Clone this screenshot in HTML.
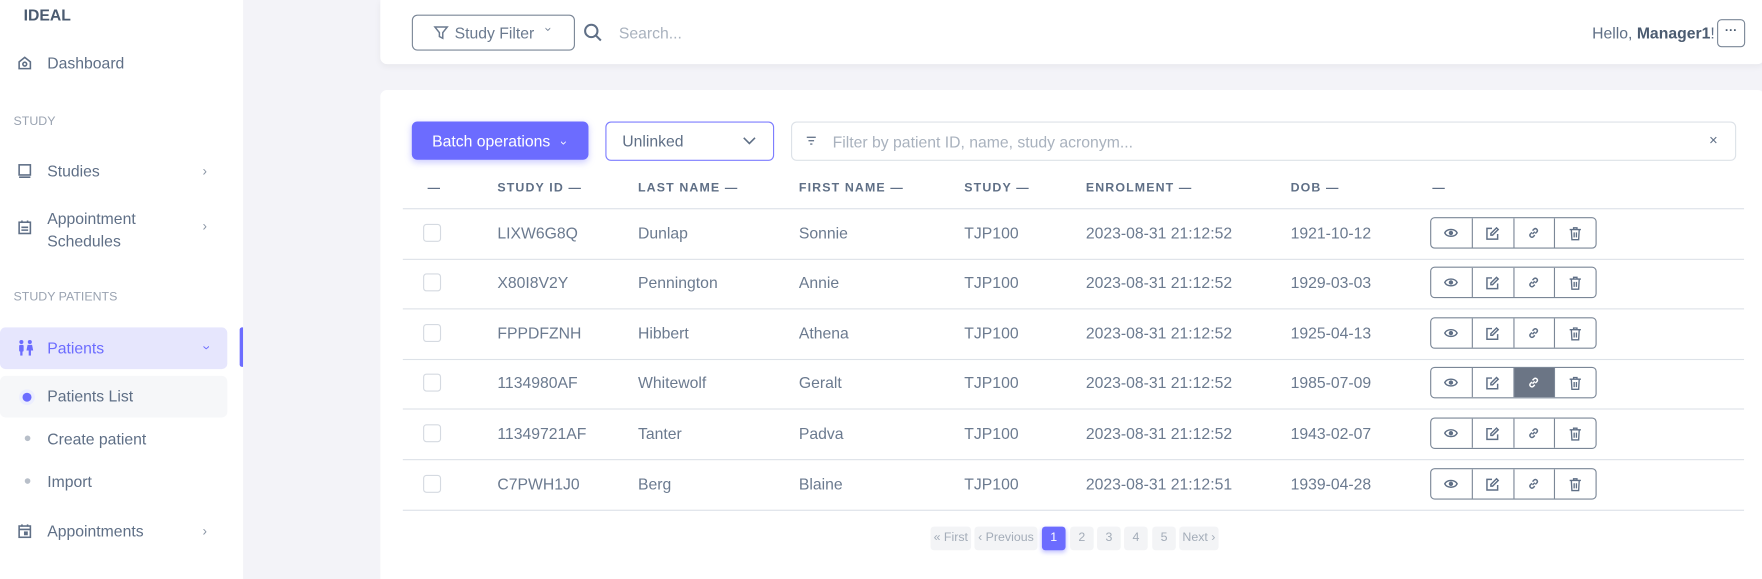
<!DOCTYPE html>
<html><head><meta charset="utf-8"><style>
*{box-sizing:border-box;margin:0;padding:0}
html,body{width:1762px;height:579px;overflow:hidden;background:#f3f3f8}
#w{position:absolute;left:0;top:0;width:1566px;height:515px;overflow:hidden;transform:scale(1.1252);transform-origin:0 0;font-family:"Liberation Sans",sans-serif;color:#6b7a8f;font-size:14px}
.a{position:absolute;white-space:nowrap}
#side{position:absolute;left:0;top:0;width:216px;height:515px;background:#fff}
.sec{font-size:11px;color:#9aa3b1;left:12px}
.nav{left:42px;font-size:14px;color:#5f6f86}
.chev{left:180px;font-size:12px;color:#8a95a5}
.card{position:absolute;background:#fff;left:338px;width:1230px}
.th{font-size:11px;font-weight:bold;letter-spacing:1px;color:#5f6f86;top:161px}
.td{font-size:14px;color:#6b7a8f}
.hl{position:absolute;left:358px;width:1192px;height:1px;background:#dde2e8}
.cb{position:absolute;left:376px;width:16px;height:16px;border:1px solid #d5dae1;border-radius:3px;background:#fff}
.act{position:absolute;left:1271px;width:148px;height:28px;border:1px solid #7b8797;border-radius:4px;display:flex;overflow:hidden}
.act div{flex:1;border-right:1px solid #7b8797;display:flex;align-items:center;justify-content:center}
.act div:last-child{border-right:none}
.pg{position:absolute;top:468px;height:21px;background:#f3f4f6;border-radius:3px;font-size:11px;color:#a3acb8;text-align:center;line-height:21px}
</style></head><body><div id="w">
<div id="side">
<div class="a" style="left:21px;top:5px;font-weight:bold;font-size:14px;color:#4b5b70">IDEAL</div>
<svg class="a" style="left:15px;top:49px" width="14" height="14" viewBox="0 0 14 14" fill="none" stroke="#5f6f86" stroke-width="1.4"><path d="M2 6L7 2l5 4v6H2z"/><circle cx="7" cy="8" r="1.7"/></svg>
<div class="a nav" style="top:48px">Dashboard</div>
<div class="a sec" style="top:102px">STUDY</div>
<svg class="a" style="left:15px;top:145px" width="14" height="14" viewBox="0 0 14 14" fill="none" stroke="#5f6f86" stroke-width="1.4"><rect x="2" y="1.5" width="10" height="9"/><path d="M2 12.5h10"/></svg>
<div class="a nav" style="top:144px">Studies</div><div class="a chev" style="top:145px">›</div>
<svg class="a" style="left:15px;top:195px" width="14" height="14" viewBox="0 0 14 14" fill="none" stroke="#5f6f86" stroke-width="1.4"><rect x="2" y="2.5" width="10" height="10"/><path d="M4.5 1v2M9.5 1v2M4 7h6M4 9.5h6"/></svg>
<div class="a nav" style="top:184px;line-height:20px">Appointment<br>Schedules</div><div class="a chev" style="top:194px">›</div>
<div class="a sec" style="top:258px">STUDY PATIENTS</div>
<div class="a" style="left:0;top:291px;width:202px;height:37px;background:#e6e6fd;border-radius:5px"></div>
<div class="a" style="left:213px;top:291px;width:3px;height:35px;background:#6c6cff;border-radius:2px 0 0 2px"></div>
<svg class="a" style="left:15px;top:302px" width="16" height="15" viewBox="0 0 16 15" fill="#6c6cff"><circle cx="4" cy="2" r="1.8"/><circle cx="11.5" cy="2" r="1.8"/><rect x="2" y="4.5" width="4" height="6" rx="1"/><rect x="3" y="9" width="2" height="5"/><path d="M9.5 4.5h4l1 5h-6z"/><rect x="10.5" y="9" width="2" height="5"/></svg>
<div class="a nav" style="top:301px;color:#6c6cff">Patients</div><div class="a chev" style="top:302px;color:#6c6cff;transform:rotate(90deg);left:182px">›</div>
<div class="a" style="left:0;top:334px;width:202px;height:37px;background:#f6f7f9;border-radius:5px"></div>
<div class="a" style="left:17px;top:346px;width:14px;height:14px;border-radius:50%;background:#fff;border:3px solid #eceefe"></div>
<div class="a" style="left:20px;top:349px;width:8px;height:8px;border-radius:50%;background:#6c6cff"></div>
<div class="a nav" style="top:344px">Patients List</div>
<div class="a" style="left:22px;top:387px;width:5px;height:5px;border-radius:50%;background:#b8bfc9"></div>
<div class="a nav" style="top:382px">Create patient</div>
<div class="a" style="left:22px;top:425px;width:5px;height:5px;border-radius:50%;background:#b8bfc9"></div>
<div class="a nav" style="top:420px">Import</div>
<svg class="a" style="left:15px;top:465px" width="14" height="14" viewBox="0 0 14 14" fill="none" stroke="#5f6f86" stroke-width="1.4"><rect x="2" y="2.5" width="10" height="10"/><path d="M4.5 1v2M9.5 1v2M2 5.5h10"/><rect x="7" y="8" width="2" height="2" fill="#5f6f86"/></svg>
<div class="a nav" style="top:464px">Appointments</div><div class="a chev" style="top:465px">›</div>
</div>

<div class="card" style="top:0;height:57px;border-radius:0 0 6px 6px;box-shadow:0 2px 6px rgba(0,0,0,.05)"></div>
<div class="a" style="left:366px;top:13px;width:145px;height:32px;border:1px solid #7b8797;border-radius:5px"></div>
<svg class="a" style="left:385px;top:22px" width="14" height="14" viewBox="0 0 14 14" fill="none" stroke="#6b7a8f" stroke-width="1.3"><path d="M1.5 2h11L8.5 7v5l-3-1.5V7z"/></svg>
<div class="a" style="left:404px;top:21px;font-size:14px;color:#6b7a8f">Study Filter</div>
<div class="a" style="left:485px;top:20px;font-size:11px;transform:rotate(90deg);color:#6b7a8f">›</div>
<svg class="a" style="left:518px;top:20px" width="18" height="18" viewBox="0 0 18 18" fill="none" stroke="#5f6f86" stroke-width="1.8"><circle cx="7.5" cy="7.5" r="5.5"/><path d="M11.5 11.5l4.5 4.5"/></svg>
<div class="a" style="left:550px;top:21px;color:#a9b2be">Search...</div>
<div class="a" style="left:1415px;top:21px;color:#5f6f86">Hello, <b style="color:#4b5b70">Manager1</b>!</div>
<div class="a" style="left:1526px;top:17px;width:25px;height:25px;border:1px solid #7b8797;border-radius:4px;text-align:center;line-height:18px;font-size:11px;color:#4b5b70;font-weight:bold">···</div>

<div class="card" style="top:80px;height:440px;border-radius:6px"></div>
<div class="a" style="left:366px;top:108px;width:157px;height:34px;background:#6c6cff;border-radius:5px;box-shadow:0 2px 6px rgba(108,108,255,.35);color:#fff;font-size:14px;line-height:34px;padding-left:18px">Batch operations <span style="display:inline-block;transform:rotate(90deg);font-size:11px;margin-left:6px">›</span></div>
<div class="a" style="left:538px;top:108px;width:150px;height:35px;border:1px solid #7d7dff;border-radius:5px;font-size:14px;color:#5f6f86;line-height:33px;padding-left:14px">Unlinked</div>
<svg class="a" style="left:660px;top:121px" width="12" height="8" viewBox="0 0 12 8" fill="none" stroke="#5f6f86" stroke-width="1.4"><path d="M1 1.5l5 5 5-5"/></svg>
<div class="a" style="left:703px;top:108px;width:840px;height:35px;border:1px solid #dde2e8;border-radius:5px"></div>
<svg class="a" style="left:716px;top:121px" width="10" height="8" viewBox="0 0 10 8" stroke="#6b7a8f" stroke-width="1.2"><path d="M1 1h8M2.5 4h5M4 7h2"/></svg>
<div class="a" style="left:740px;top:118px;color:#a9b2be">Filter by patient ID, name, study acronym...</div>
<div class="a" style="left:1519px;top:117px;color:#5f6f86;font-size:13px">×</div>

<div class="a th" style="left:380px">—</div>
<div class="a th" style="left:442px">STUDY ID —</div>
<div class="a th" style="left:567px">LAST NAME —</div>
<div class="a th" style="left:710px">FIRST NAME —</div>
<div class="a th" style="left:857px">STUDY —</div>
<div class="a th" style="left:965px">ENROLMENT —</div>
<div class="a th" style="left:1147px">DOB —</div>
<div class="a th" style="left:1273px">—</div>
<div class="hl" style="top:185px"></div>

<div id="rows"></div>
<script>
var R=[["LIXW6G8Q","Dunlap","Sonnie","2023-08-31 21:12:52","1921-10-12"],["X80I8V2Y","Pennington","Annie","2023-08-31 21:12:52","1929-03-03"],["FPPDFZNH","Hibbert","Athena","2023-08-31 21:12:52","1925-04-13"],["1134980AF","Whitewolf","Geralt","2023-08-31 21:12:52","1985-07-09"],["11349721AF","Tanter","Padva","2023-08-31 21:12:52","1943-02-07"],["C7PWH1J0","Berg","Blaine","2023-08-31 21:12:51","1939-04-28"]];
var eye='<svg width="13" height="10" viewBox="0 0 13 10" fill="none" stroke="#5f6f86" stroke-width="1.3"><path d="M1 5c2-4 9-4 11 0-2 4-9 4-11 0z"/><circle cx="6.5" cy="5" r="1.3" fill="#5f6f86"/></svg>';
var ed='<svg width="13" height="13" viewBox="0 0 13 13" fill="none" stroke="#5f6f86" stroke-width="1.3"><path d="M6 2H1.5v9.5H11V7"/><path d="M10 1.5l1.5 1.5L6.5 8H5V6.5z"/></svg>';
var lk=function(c){return '<svg width="12" height="12" viewBox="0 0 12 12" fill="none" stroke="'+c+'" stroke-width="1.3"><path d="M5 7l2-2M4.5 5.5L3 7a1.8 1.8 0 0 0 2.5 2.5L7 8M7.5 6.5L9 5a1.8 1.8 0 0 0-2.5-2.5L5 4"/></svg>'};
var tr='<svg width="12" height="13" viewBox="0 0 12 13" fill="none" stroke="#5f6f86" stroke-width="1.2"><path d="M1 3h10M4.5 3V1.5h3V3M2.5 3l.5 9h6l.5-9M5 5.5v4.5M7 5.5v4.5"/></svg>';
var h='',tops=[207,251,296,340,385,430];
R.forEach(function(r,i){var y=tops[i];
h+='<div class="cb" style="top:'+(y-8)+'px"></div>';
[[442,r[0]],[567,r[1]],[710,r[2]],[857,'TJP100'],[965,r[3]],[1147,r[4]]].forEach(function(c){h+='<div class="a td" style="left:'+c[0]+'px;top:'+(y-8)+'px">'+c[1]+'</div>'});
var act=i==3;
h+='<div class="act" style="top:'+(y-14)+'px"><div>'+eye+'</div><div>'+ed+'</div><div style="'+(act?'background:#6b7585':'')+'">'+lk(act?'#fff':'#5f6f86')+'</div><div>'+tr+'</div></div>';
h+='<div class="hl" style="top:'+(y+23)+'px"></div>';});
document.getElementById('rows').innerHTML=h;
</script>

<div class="pg" style="left:827px;width:36px">« First</div>
<div class="pg" style="left:866px;width:56px">‹ Previous</div>
<div class="pg" style="left:926px;width:21px;background:#6c6cff;color:#fff;box-shadow:0 2px 4px rgba(108,108,255,.4)">1</div>
<div class="pg" style="left:951px;width:21px">2</div>
<div class="pg" style="left:975px;width:21px">3</div>
<div class="pg" style="left:999px;width:21px">4</div>
<div class="pg" style="left:1024px;width:21px">5</div>
<div class="pg" style="left:1048px;width:35px">Next ›</div>
</div></body></html>
